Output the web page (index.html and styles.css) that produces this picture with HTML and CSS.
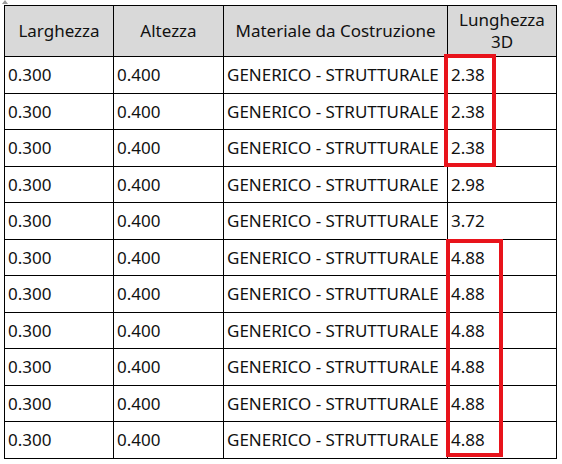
FILE: index.html
```html
<!DOCTYPE html>
<html lang="it">
<head>
<meta charset="utf-8">
<title>Tabella</title>
<link rel="stylesheet" href="styles.css">
</head>
<body>
<div class="sheet">
  <span class="corner"></span>
  <table class="grid">
    <colgroup>
      <col class="c1"><col class="c2"><col class="c3"><col class="c4">
    </colgroup>
    <thead>
      <tr>
        <th>Larghezza</th>
        <th>Altezza</th>
        <th>Materiale da Costruzione</th>
        <th>Lunghezza<br>3D</th>
      </tr>
    </thead>
    <tbody>
      <tr><td>0.300</td><td>0.400</td><td>GENERICO - STRUTTURALE</td><td>2.38</td></tr>
      <tr><td>0.300</td><td>0.400</td><td>GENERICO - STRUTTURALE</td><td>2.38</td></tr>
      <tr><td>0.300</td><td>0.400</td><td>GENERICO - STRUTTURALE</td><td>2.38</td></tr>
      <tr><td>0.300</td><td>0.400</td><td>GENERICO - STRUTTURALE</td><td>2.98</td></tr>
      <tr><td>0.300</td><td>0.400</td><td>GENERICO - STRUTTURALE</td><td>3.72</td></tr>
      <tr><td>0.300</td><td>0.400</td><td>GENERICO - STRUTTURALE</td><td>4.88</td></tr>
      <tr><td>0.300</td><td>0.400</td><td>GENERICO - STRUTTURALE</td><td>4.88</td></tr>
      <tr><td>0.300</td><td>0.400</td><td>GENERICO - STRUTTURALE</td><td>4.88</td></tr>
      <tr><td>0.300</td><td>0.400</td><td>GENERICO - STRUTTURALE</td><td>4.88</td></tr>
      <tr><td>0.300</td><td>0.400</td><td>GENERICO - STRUTTURALE</td><td>4.88</td></tr>
      <tr><td>0.300</td><td>0.400</td><td>GENERICO - STRUTTURALE</td><td>4.88</td></tr>
    </tbody>
  </table>
  <div class="mark mark-a"></div>
  <div class="mark mark-b"></div>
</div>
</body>
</html>
```
FILE: styles.css
```css
html, body {
  margin: 0;
  padding: 0;
  background: #ffffff;
}

body {
  font-family: "Noto Sans", "Open Sans", sans-serif;
  color: #111111;
}

.sheet {
  position: relative;
  padding: 5px 0 0 4px;
  width: 562px;
  height: 464px;
  box-sizing: border-box;
}

.corner {
  position: absolute;
  left: 2px;
  top: 0;
  width: 0;
  height: 0;
  border-left: 3px solid transparent;
  border-right: 3px solid transparent;
  border-bottom: 4px solid #9a9a9a;
}

.grid {
  border-collapse: collapse;
  table-layout: fixed;
  width: 552px;
  font-size: 17px;
}

.c1 { width: 109px; }
.c2 { width: 110px; }
.c3 { width: 224px; }
.c4 { width: 109px; }

.grid th,
.grid td {
  border: 1px solid #000;
  padding: 0 3px;
  white-space: nowrap;
  overflow: hidden;
}

.grid th {
  background: #d9d9d9;
  font-weight: normal;
  text-align: center;
  height: 50px;
  line-height: 22px;
}

.grid td {
  height: 35.5px;
  text-align: left;
}

.mark {
  position: absolute;
  border: 4px solid #e8131b;
  box-sizing: border-box;
}

.mark-a {
  left: 444px;
  top: 54px;
  width: 52px;
  height: 113px;
}

.mark-b {
  left: 446px;
  top: 239px;
  width: 57px;
  height: 218px;
}
```
